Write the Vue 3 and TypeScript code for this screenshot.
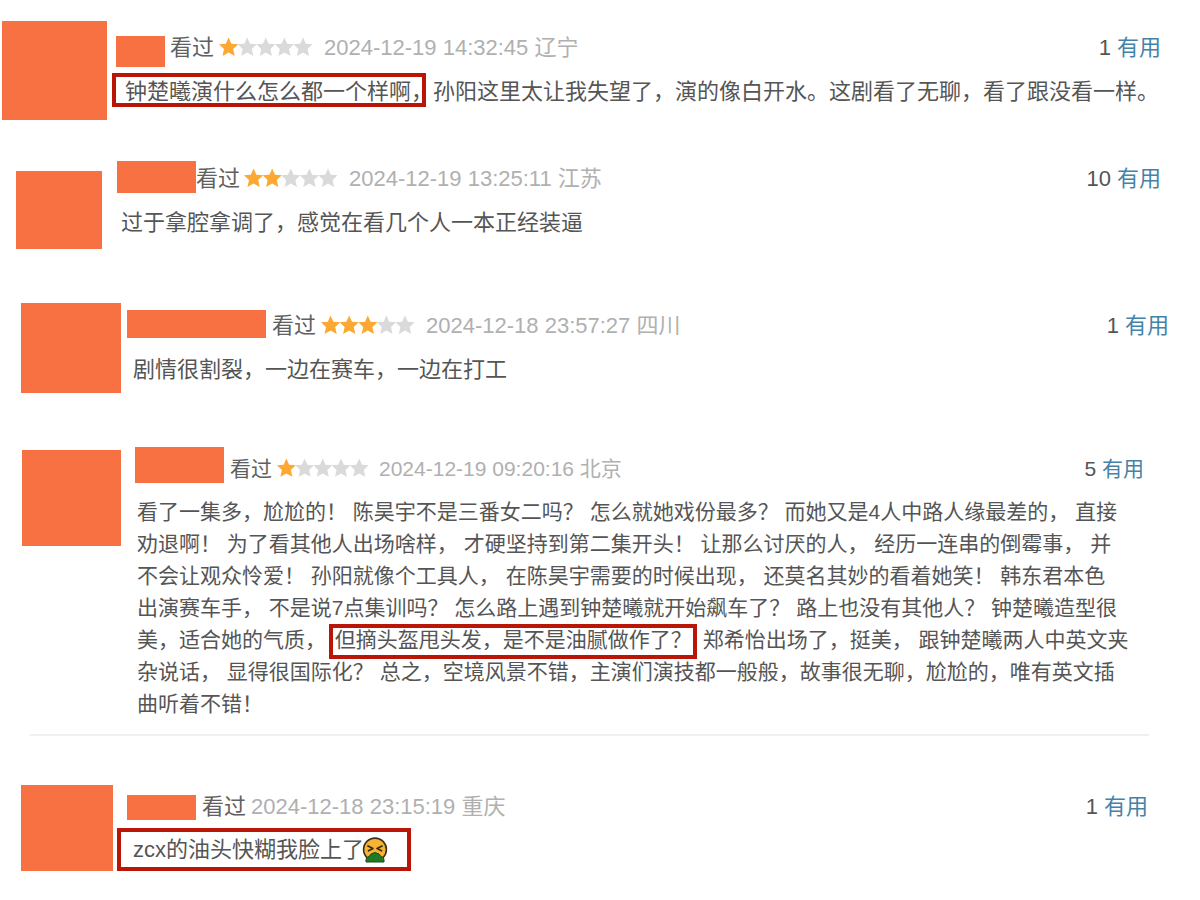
<script setup lang="ts">
interface Segment {
  text: string
  marked?: boolean
  emoji?: boolean
}

interface Review {
  id: string
  stars: number | null
  date: string
  place: string
  votes: number
  lines: Segment[][]
  divider?: boolean
}

const starSlots = [0, 1, 2, 3, 4]

const reviews: Review[] = [
  {
    id: 'liaoning',
    stars: 1,
    date: '2024-12-19 14:32:45',
    place: '辽宁',
    votes: 1,
    lines: [
      [
        { text: '钟楚曦演什么怎么都一个样啊，', marked: true },
        { text: '孙阳这里太让我失望了，演的像白开水。这剧看了无聊，看了跟没看一样。' },
      ],
    ],
  },
  {
    id: 'jiangsu',
    stars: 2,
    date: '2024-12-19 13:25:11',
    place: '江苏',
    votes: 10,
    lines: [[{ text: '过于拿腔拿调了，感觉在看几个人一本正经装逼' }]],
  },
  {
    id: 'sichuan',
    stars: 3,
    date: '2024-12-18 23:57:27',
    place: '四川',
    votes: 1,
    lines: [[{ text: '剧情很割裂，一边在赛车，一边在打工' }]],
  },
  {
    id: 'beijing',
    stars: 1,
    date: '2024-12-19 09:20:16',
    place: '北京',
    votes: 5,
    divider: true,
    lines: [
      [{ text: '看了一集多，尬尬的！ 陈昊宇不是三番女二吗？ 怎么就她戏份最多？ 而她又是4人中路人缘最差的， 直接' }],
      [{ text: '劝退啊！ 为了看其他人出场啥样， 才硬坚持到第二集开头！ 让那么讨厌的人， 经历一连串的倒霉事， 并' }],
      [{ text: '不会让观众怜爱！ 孙阳就像个工具人， 在陈昊宇需要的时候出现， 还莫名其妙的看着她笑！ 韩东君本色' }],
      [{ text: '出演赛车手， 不是说7点集训吗？ 怎么路上遇到钟楚曦就开始飙车了？ 路上也没有其他人？ 钟楚曦造型很' }],
      [
        { text: '美，适合她的气质， ' },
        { text: '但摘头盔甩头发，是不是油腻做作了？', marked: true },
        { text: ' 郑希怡出场了，挺美， 跟钟楚曦两人中英文夹' },
      ],
      [{ text: '杂说话， 显得很国际化？ 总之，空境风景不错，主演们演技都一般般，故事很无聊，尬尬的，唯有英文插' }],
      [{ text: '曲听着不错！' }],
    ],
  },
  {
    id: 'chongqing',
    stars: null,
    date: '2024-12-18 23:15:19',
    place: '重庆',
    votes: 1,
    lines: [[{ text: 'zcx的油头快糊我脸上了', marked: true, emoji: true }]],
  },
]
</script>

<template>
  <main class="reviews" lang="zh-CN">
    <template v-for="review in reviews" :key="review.id">
      <article class="review" :class="review.id">
        <div class="avatar"></div>
        <div class="body">
          <header class="head">
            <span class="name"></span>
            <span class="status">看过</span>
            <svg
              v-if="review.stars !== null"
              class="stars"
              viewBox="0 0 94 20"
              role="img"
              :aria-label="`${review.stars} / 5`"
            >
              <path
                v-for="n in starSlots"
                :key="n"
                :class="n < review.stars ? 'on' : 'off'"
                :transform="`translate(${n * 18.6} 0)`"
                d="M9.6 .4 L12.4 6.7 L19.2 7.3 L14.2 12 L15.7 19 L9.6 15.6 L3.5 19 L5 12 L0 7.3 L6.8 6.7 Z"
              />
            </svg>
            <span class="when">{{ review.date }} {{ review.place }}</span>
            <span class="vote">{{ review.votes }} <a href="#">有用</a></span>
          </header>
          <p class="comment">
            <span v-for="(line, i) in review.lines" :key="i" class="line"
              ><template v-for="(part, j) in line" :key="j"
                ><mark v-if="part.marked"
                  >{{ part.text
                  }}<svg v-if="part.emoji" class="emoji" viewBox="0 0 26 26" role="img" aria-label="呕吐">
                    <circle cx="13" cy="12.5" r="11.4" fill="#f5b434" stroke="#3b2f1c" stroke-width="1.6" />
                    <path d="M6 9 L11 11.4 L6.5 13.8 M20 9 L15 11.4 L19.5 13.8" fill="none" stroke="#3b2a12" stroke-width="1.7" stroke-linecap="round" stroke-linejoin="round" />
                    <path d="M9 17 Q13 14 17 17 L19 19.5 Q22.5 20 22 25 L4 25 Q3.5 20 7 19.5 Z" fill="#1f7a25" stroke="#1d4a1b" stroke-width="1" stroke-linejoin="round" />
                  </svg></mark
                ><template v-else>{{ part.text }}</template></template
              ></span
            >
          </p>
        </div>
      </article>
      <hr v-if="review.divider" class="divider" />
    </template>
  </main>
</template>

<style>
body {
  margin: 0;
  background: #fff;
}
</style>

<style scoped>
.reviews {
  display: flex;
  flex-direction: column;
  overflow-x: clip;
  font-family: "Liberation Sans", "Noto Sans CJK SC", sans-serif;
  font-size: 22px;
  color: #555;
}

.review {
  display: flex;
  align-items: flex-start;
}

.avatar,
.name {
  flex: none;
  background: #f77142;
}

.body {
  flex: 1;
  min-width: 0;
}

.head {
  display: flex;
  align-items: center;
  height: 38px;
  line-height: 32px;
  white-space: nowrap;
}

.status {
  margin-left: 5px;
  color: #606060;
}

.stars {
  flex: none;
  width: 94px;
  height: 20px;
  margin: 0 6px 2px 5px;
}

.on {
  fill: #fca832;
}

.off {
  fill: #dadada;
}

.when {
  margin-left: 5px;
  color: #b0b0b0;
}

.vote {
  margin-left: auto;
}

.vote a {
  color: #4482a8;
  text-decoration: none;
}

.comment {
  margin: 9px 0 0;
  line-height: 32px;
}

.line {
  display: block;
  height: 32px;
  white-space: pre;
}

mark {
  position: relative;
  display: inline-block;
  height: 32px;
  background: none;
  color: inherit;
}

mark::after {
  content: "";
  position: absolute;
  border: 4px solid #ba1608;
}

.emoji {
  width: 26px;
  height: 26px;
  margin-left: -2px;
  vertical-align: -6px;
}

.divider {
  align-self: stretch;
  height: 2px;
  margin: 14px 51px 0 30px;
  border: 0;
  background: #f0f0f0;
}

.liaoning { margin: 21px 39px 0 2px; }
.liaoning .avatar { width: 105px; height: 99px; }
.liaoning .body { padding: 8px 0 0 9px; }
.liaoning .name { width: 49px; height: 31px; margin-top: 6px; }
.liaoning .comment { padding-left: 9px; }
.liaoning mark::after { inset: -3px 7px 1px -13px; }

.jiangsu { margin: 40px 39px 0 16px; }
.jiangsu .avatar { width: 86px; height: 78px; margin-top: 11px; }
.jiangsu .body { padding-left: 15px; }
.jiangsu .name { width: 79px; height: 32px; margin-bottom: 4px; }
.jiangsu .status { margin-left: 0; }
.jiangsu .stars { margin-left: 4px; }
.jiangsu .comment { padding-left: 4px; }

.sichuan { margin: 54px 31px 0 21px; }
.sichuan .avatar { width: 100px; height: 90px; }
.sichuan .body { padding: 4px 0 0 6px; }
.sichuan .name { width: 139px; height: 28px; margin-bottom: 4px; }
.sichuan .status { margin-left: 6px; }
.sichuan .comment { padding-left: 6px; }

.beijing { margin: 57px 56px 0 22px; font-size: 21px; }
.beijing .avatar { width: 99px; height: 96px; }
.beijing .body { padding-left: 14px; }
.beijing .name { width: 89px; height: 36px; margin-bottom: 8px; }
.beijing .status { margin-left: 6px; }
.beijing .stars { width: 92px; }
.beijing .when { margin-left: 4px; }
.beijing .comment { margin-top: 8px; padding-left: 2px; }
.beijing mark { margin: 0 5px 0 3px; }
.beijing mark::after { inset: 0 -5px -3px -6px; }

.chongqing { margin: 49px 52px 0 21px; }
.chongqing .avatar { width: 92px; height: 86px; }
.chongqing .body { padding: 3px 0 0 14px; }
.chongqing .name { width: 69px; height: 25px; }
.chongqing .status { margin-left: 6px; }
.chongqing .comment { margin-top: 8px; padding-left: 6px; }
.chongqing mark::after { inset: -6px -23px -5px -16px; }
</style>
